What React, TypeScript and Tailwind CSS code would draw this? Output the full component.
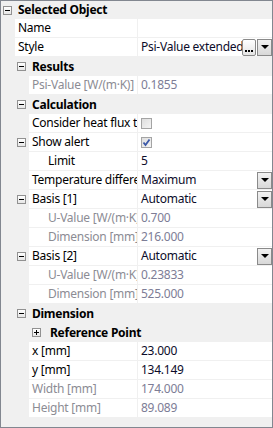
import React from 'react';

type Row =
  | { kind: 'cat'; level: 0 | 1 | 2; label: string; closed?: boolean }
  | {
      kind: 'prop';
      level: 1 | 2;
      name: string;
      value?: string;
      sub?: boolean;
      disabled?: boolean;
      check?: boolean;
      expander?: boolean;
      dropdown?: boolean;
      dots?: boolean;
    };

const rows: Row[] = [
  { kind: 'cat', level: 0, label: 'Selected Object' },
  { kind: 'prop', level: 1, name: 'Name', value: '' },
  { kind: 'prop', level: 1, name: 'Style', value: 'Psi-Value extended', dots: true, dropdown: true },
  { kind: 'cat', level: 1, label: 'Results' },
  { kind: 'prop', level: 2, name: 'Psi-Value [W/(m·K)]', value: '0.1855', disabled: true },
  { kind: 'cat', level: 1, label: 'Calculation' },
  { kind: 'prop', level: 2, name: 'Consider heat flux through', check: false },
  { kind: 'prop', level: 2, name: 'Show alert', check: true, expander: true },
  { kind: 'prop', level: 2, name: 'Limit', value: '5', sub: true },
  { kind: 'prop', level: 2, name: 'Temperature difference', value: 'Maximum', dropdown: true },
  { kind: 'prop', level: 2, name: 'Basis [1]', value: 'Automatic', dropdown: true, expander: true },
  { kind: 'prop', level: 2, name: 'U-Value [W/(m·K)]', value: '0.700', sub: true, disabled: true },
  { kind: 'prop', level: 2, name: 'Dimension [mm]', value: '216.000', sub: true, disabled: true },
  { kind: 'prop', level: 2, name: 'Basis [2]', value: 'Automatic', dropdown: true, expander: true },
  { kind: 'prop', level: 2, name: 'U-Value [W/(m·K)]', value: '0.23833', sub: true, disabled: true },
  { kind: 'prop', level: 2, name: 'Dimension [mm]', value: '525.000', sub: true, disabled: true },
  { kind: 'cat', level: 1, label: 'Dimension' },
  { kind: 'cat', level: 2, label: 'Reference Point', closed: true },
  { kind: 'prop', level: 2, name: 'x [mm]', value: '23.000' },
  { kind: 'prop', level: 2, name: 'y [mm]', value: '134.149' },
  { kind: 'prop', level: 2, name: 'Width [mm]', value: '174.000', disabled: true },
  { kind: 'prop', level: 2, name: 'Height [mm]', value: '89.089', disabled: true },
];

function Expander({ closed }: { closed?: boolean }) {
  return (
    <div className="relative w-[9px] h-[9px] border border-[#919191] bg-gradient-to-b from-white to-[#e6e6e6] shrink-0">
      <div className="absolute left-[1px] top-[3px] w-[5px] h-[1px] bg-black" />
      {closed && <div className="absolute left-[3px] top-[1px] w-[1px] h-[5px] bg-black" />}
    </div>
  );
}

function DropButton() {
  return (
    <div className="w-[15px] h-[17px] border border-[#8a8a8a] bg-gradient-to-b from-[#f2f2f2] to-[#d8d8d8] flex items-center justify-center shrink-0">
      <div className="w-0 h-0 border-l-[4px] border-r-[4px] border-t-[4px] border-l-transparent border-r-transparent border-t-black" />
    </div>
  );
}

function DotsButton() {
  return (
    <div className="w-[14px] h-[17px] rounded-[2px] border border-[#8a8a8a] bg-gradient-to-b from-white to-[#e4e4e4] flex items-end justify-center pb-[3px] gap-[1px] shrink-0 mr-[1px]">
      <div className="w-[2px] h-[2px] bg-black" />
      <div className="w-[2px] h-[2px] bg-black" />
      <div className="w-[2px] h-[2px] bg-black" />
    </div>
  );
}

function CheckBox({ checked }: { checked: boolean }) {
  return (
    <div className="w-[11px] h-[11px] border border-[#a4a4a4] bg-gradient-to-br from-[#dedede] to-[#f4f4f4] flex items-center justify-center">
      {checked && (
        <svg width="9" height="9" viewBox="0 0 9 9">
          <path d="M1.5 4.5 L3.5 7 L7.5 1.5" fill="none" stroke="#3b58a8" strokeWidth="1.8" />
        </svg>
      )}
    </div>
  );
}

export default function App() {
  return (
    <div className="w-[273px] h-[428px] border border-[#828790] bg-[#f0f0f0] overflow-hidden font-['Noto_Sans',sans-serif] text-[12px] tracking-[-0.25px] leading-none text-black">
      {rows.map((r, i) => {
        if (r.kind === 'cat') {
          const pad = r.level === 0 ? 'pl-[2px]' : r.level === 1 ? 'pl-[16px]' : 'pl-[31px]';
          const gap = r.level === 2 ? 'gap-[9px]' : 'gap-[6px]';
          return (
            <div key={i} className={`flex items-center ${i === 0 ? 'h-[18px]' : 'h-[19px]'} ${pad} ${gap} font-bold`}>
              <Expander closed={r.closed} />
              <span className="whitespace-nowrap">{r.label}</span>
            </div>
          );
        }
        const gutter = r.level === 1 ? 'w-[14px]' : 'w-[28px]';
        const nameW = r.level === 1 ? 'w-[122px]' : 'w-[108px]';
        const valColor = r.disabled ? 'text-[#7d7d96]' : 'text-[#0c0c2a]';
        return (
          <div key={i} className="flex h-[19px] pb-[1px]">
            <div className={`${gutter} shrink-0 flex items-center justify-end pr-[3px]`}>
              {r.expander && <Expander />}
            </div>
            <div
              className={`${nameW} shrink-0 bg-white flex items-center overflow-hidden whitespace-nowrap ${
                r.sub ? 'pl-[19px]' : 'pl-[3px]'
              } ${r.disabled ? 'text-[#8c8c94]' : 'text-black'}`}
            >
              {r.name}
            </div>
            <div className="w-[1px] shrink-0" />
            <div className={`flex-1 bg-white flex items-center overflow-hidden min-w-0 ${valColor}`}>
              {r.check !== undefined ? (
                <div className="pl-[3px]">
                  <CheckBox checked={r.check} />
                </div>
              ) : (
                <span className="pl-[3px] flex-1 min-w-0 overflow-hidden whitespace-nowrap">{r.value}</span>
              )}
              {r.dots && <DotsButton />}
              {r.dropdown && <DropButton />}
            </div>
          </div>
        );
      })}
    </div>
  );
}
